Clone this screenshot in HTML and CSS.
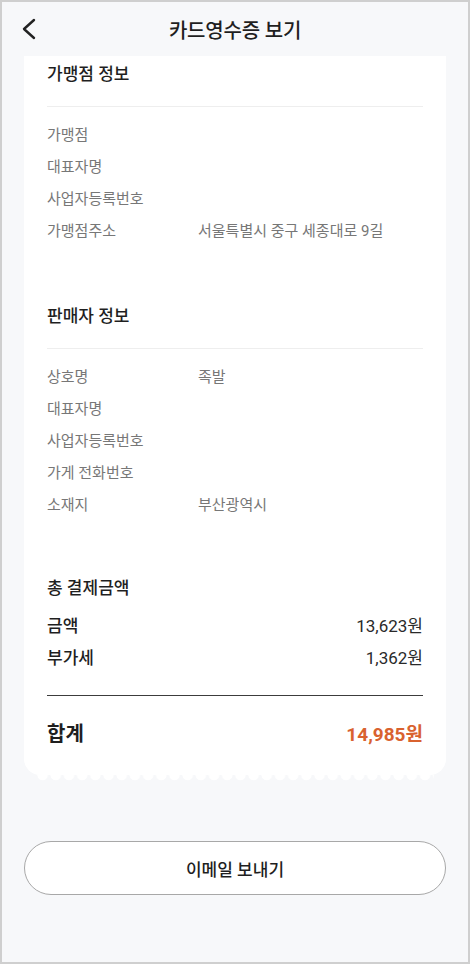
FILE: index.html
```html
<!DOCTYPE html>
<html lang="ko">
<head>
  <meta charset="UTF-8">
  <meta name="viewport" content="width=device-width, initial-scale=1.0">
  <title>카드영수증 보기</title>
  <link rel="stylesheet" href="styles.css">
</head>
<body>
  <div class="screen">
    <header class="header">
      <button class="back-button" aria-label="뒤로">
        <svg width="16" height="22" viewBox="0 0 16 22">
          <polyline points="13,2 3,11 13,20" fill="none" stroke="#222" stroke-width="2.4" stroke-linecap="round" stroke-linejoin="round"/>
        </svg>
      </button>
      <h1 class="page-title">카드영수증 보기</h1>
    </header>

    <main class="main-content">
      <section class="receipt">
        <div class="receipt-section">
          <h2 class="section-title with-line">가맹점 정보</h2>
          <div class="info-row"><span class="info-label">가맹점</span><span class="info-value"></span></div>
          <div class="info-row"><span class="info-label">대표자명</span><span class="info-value"></span></div>
          <div class="info-row"><span class="info-label">사업자등록번호</span><span class="info-value"></span></div>
          <div class="info-row"><span class="info-label">가맹점주소</span><span class="info-value">서울특별시 중구 세종대로 9길</span></div>
        </div>

        <div class="receipt-section">
          <h2 class="section-title with-line">판매자 정보</h2>
          <div class="info-row"><span class="info-label">상호명</span><span class="info-value">족발</span></div>
          <div class="info-row"><span class="info-label">대표자명</span><span class="info-value"></span></div>
          <div class="info-row"><span class="info-label">사업자등록번호</span><span class="info-value"></span></div>
          <div class="info-row"><span class="info-label">가게 전화번호</span><span class="info-value"></span></div>
          <div class="info-row"><span class="info-label">소재지</span><span class="info-value">부산광역시</span></div>
        </div>

        <div class="receipt-section total-section">
          <h2 class="section-title">총 결제금액</h2>
          <div class="amount-list">
            <div class="amount-row"><span class="amount-label">금액</span><span class="amount-value">13,623원</span></div>
            <div class="amount-row"><span class="amount-label">부가세</span><span class="amount-value">1,362원</span></div>
          </div>
          <div class="total-row">
            <span class="total-label">합계</span>
            <span class="total-value">14,985원</span>
          </div>
        </div>
      </section>

      <button class="email-button">이메일 보내기</button>
    </main>
  </div>
</body>
</html>
```

FILE: styles.css
```css
:root {
  --page-bg: #f7f8fa;
  --text-dark: #1f1f1f;
  --text-grey: #777777;
  --line-light: #eeeeee;
  --accent-orange: #d9622f;
}
* {
  box-sizing: border-box;
}
body {
  margin: 0;
  padding: 0;
  font-family: Roboto, 'Noto Sans CJK KR', sans-serif;
  color: var(--text-dark);
  background-color: #ffffff;
}
.screen {
  width: 470px;
  height: 964px;
  border: 2px solid #cfcfcf;
  background-color: var(--page-bg);
  overflow: hidden;
}
.header {
  height: 54px;
  display: flex;
  align-items: center;
  justify-content: center;
  position: relative;
}
.back-button {
  position: absolute;
  left: 19px;
  top: 16px;
  padding: 0;
  border: none;
  background: none;
  display: flex;
}
.page-title {
  margin: 0;
  font-size: 20px;
  font-weight: 500;
  color: var(--text-dark);
  letter-spacing: -0.2px;
}
.main-content {
  padding: 0 22px;
}
.receipt {
  position: relative;
  background-color: #ffffff;
  padding: 6px 23px 27px;
  border-radius: 0 0 16px 16px;
  display: flex;
  flex-direction: column;
  gap: 57px;
}
.receipt::after {
  content: '';
  position: absolute;
  left: 12px;
  right: 12px;
  bottom: -6px;
  height: 6px;
  background: radial-gradient(circle at 50% 0, #ffffff 5px, transparent 5.6px) repeat-x;
  background-size: 13.2px 6px;
}
.total-section {
  margin-top: -2px;
}
.section-title {
  margin: 0;
  font-size: 17px;
  line-height: 24px;
  font-weight: 500;
  color: var(--text-dark);
}
.section-title.with-line {
  padding-bottom: 20px;
  border-bottom: 1px solid var(--line-light);
  margin-bottom: 12px;
}
.info-row {
  display: flex;
  font-size: 15px;
  line-height: 32px;
  color: var(--text-grey);
}
.info-label {
  width: 151px;
  flex-shrink: 0;
}
.amount-list {
  margin-top: 10px;
  padding-bottom: 21px;
  border-bottom: 1px solid #3c3c3c;
}
.amount-row {
  display: flex;
  justify-content: space-between;
  font-size: 17px;
  line-height: 32px;
}
.amount-label {
  font-weight: 500;
}
.amount-value {
  color: #2a2a2a;
}
.total-row {
  display: flex;
  justify-content: space-between;
  align-items: center;
  margin-top: 20px;
  height: 32px;
}
.total-label {
  font-size: 20px;
  font-weight: 700;
}
.total-value {
  font-size: 19px;
  font-weight: 700;
  color: var(--accent-orange);
}
.email-button {
  display: block;
  width: 100%;
  height: 54px;
  margin-top: 66px;
  background-color: #ffffff;
  border: 1px solid #a8a8a8;
  border-radius: 27px;
  font-family: inherit;
  font-size: 17px;
  font-weight: 500;
  color: var(--text-dark);
}
```
